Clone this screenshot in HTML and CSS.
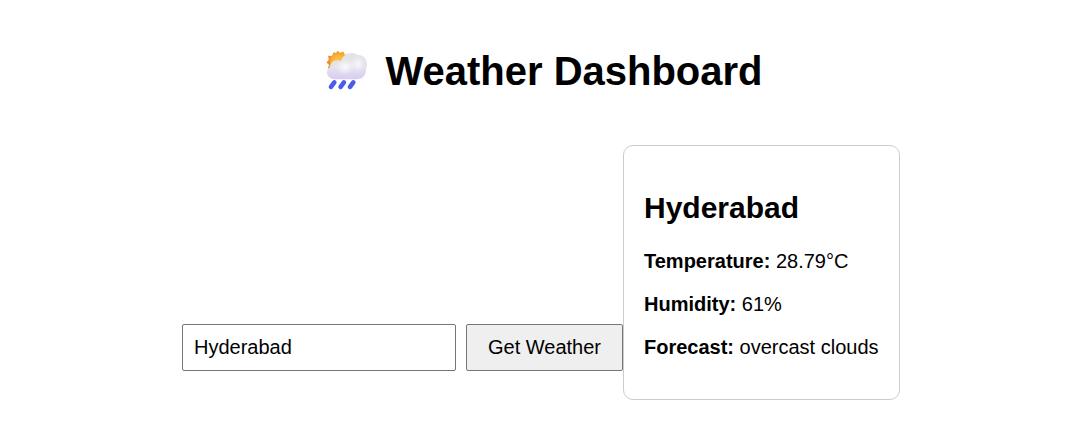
FILE: index.html
```html
<!DOCTYPE html>
<html lang="en">
<head>
<meta charset="utf-8">
<title>Weather Dashboard</title>
<link rel="stylesheet" href="styles.css">
</head>
<body>
<main class="app">
  <h1 class="title">
    <svg class="title-icon" viewBox="0 0 42 42" aria-hidden="true">
      <defs>
        <linearGradient id="sun" x1="0" y1="0" x2="1" y2="0"><stop offset="0" stop-color="#f08a30"/><stop offset="1" stop-color="#f9b233"/></linearGradient>
        <radialGradient id="disc" cx=".55" cy=".6" r=".6"><stop offset="0" stop-color="#ffd24a"/><stop offset="1" stop-color="#f7a92f"/></radialGradient>
        <linearGradient id="cloud" x1="0" y1="0" x2="0" y2="1"><stop offset="0" stop-color="#e3e2e5"/><stop offset=".5" stop-color="#e6e4ea"/><stop offset="1" stop-color="#d8ccf3"/></linearGradient>
        <radialGradient id="shine"><stop offset="0" stop-color="#fff"/><stop offset="1" stop-color="#fff" stop-opacity="0"/></radialGradient>
      </defs>
      <path fill="url(#sun)" d="M12.500.8l2.500 2 3.500-1.400 1.200 3 3.800.2v4l-7 12-13.800-2 1.400-3.500L1.500 12.500l2.300-2.700-.8-4 4 .1 1.500-3.600 2.500.6z"/>
      <circle cx="13" cy="11.500" r="8" fill="url(#disc)"/>
      <path fill="url(#cloud)" d="M10 29.200C5.500 29.200 2 26.300 2 22.500c0-2.600 1.300-4.500 3.100-5.500C5 13 8.500 10.200 12.200 10.200c1.500 0 2.700.4 3.700 1.100C17 6.300 21.500 3 26.500 3c2.500 0 4.500.8 6 2C38 4.300 42 8.500 42 14.500c0 2-.5 3.500-1.200 4.800.7 5.700-3 9.900-8.800 9.900z"/>
      <ellipse cx="20" cy="17" rx="10" ry="8" fill="url(#shine)" opacity=".8"/>
      <ellipse cx="33" cy="14" rx="7" ry="8" fill="url(#shine)" opacity=".7"/>
      <path stroke="#4b5bea" stroke-width="4.600" stroke-linecap="round" d="M9.300 32.400l-3.300 4.400M18.900 32.400l-3.300 4.400M28.300 32.400l-3.300 4.400"/>
    </svg>
    <span>Weather Dashboard</span>
  </h1>
  <div class="row">
    <input class="city" type="text" value="Hyderabad">
    <button class="get">Get Weather</button>
    <section class="card">
      <h2 class="name">Hyderabad</h2>
      <p class="fact"><strong>Temperature:</strong> 28.79°C</p>
      <p class="fact"><strong>Humidity:</strong> 61%</p>
      <p class="fact"><strong>Forecast:</strong> overcast clouds</p>
    </section>
  </div>
</main>
</body>
</html>
```
FILE: styles.css
```css
body { margin: 0; background: #fff; color: #000; font-family: "Liberation Sans", Arial, sans-serif; font-size: 20px; }
.app { padding: 48px 4px 0 0; }
.title { display: flex; justify-content: center; align-items: center; gap: 18px; margin: 0 0 51px; padding-left: 6px; font-size: 40px; line-height: 46px; }
.title-icon { width: 42px; height: 42px; }
.row { display: flex; justify-content: center; align-items: last baseline; }
.city { box-sizing: border-box; width: 274px; height: 47px; margin: 0 10px 0 0; padding: 0 11px; border: 1px solid #767676; border-radius: 2px; font: inherit; }
.get { box-sizing: border-box; width: 157px; height: 47px; padding: 0; border: 1px solid #767676; border-radius: 2px; background: #efefef; color: #000; font: inherit; }
.card { box-sizing: border-box; width: 277px; height: 255px; padding: 44px 20px 0; border: 1px solid #ccc; border-radius: 10px; white-space: nowrap; }
.name { margin: 0 0 25px; font-size: 30px; line-height: 35px; }
.fact { margin: 0 0 20px; line-height: 23px; }
```
